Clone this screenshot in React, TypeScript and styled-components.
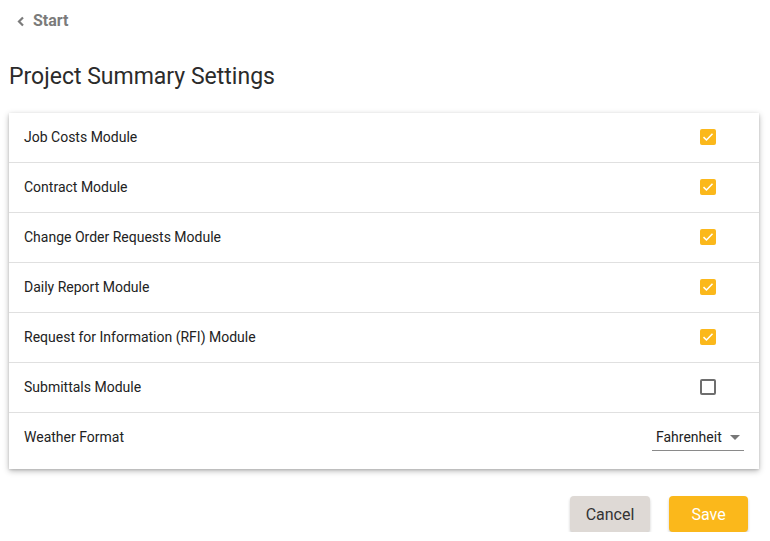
import React from "react";
import styled, { createGlobalStyle } from "styled-components";

const Global = createGlobalStyle`
  html, body { margin: 0; padding: 0; background: #ffffff; }
  body { font-family: Roboto, "Noto Sans", sans-serif; -webkit-font-smoothing: antialiased; }
  * { box-sizing: border-box; }
`;

const Page = styled.div`
  width: 770px;
  padding: 0 11px 0 9px;
`;

const BackLink = styled.a`
  display: flex;
  align-items: center;
  gap: 8px;
  height: 20px;
  margin: 10px 0 0 8px;
  color: #7b7b7b;
  font-size: 16px;
  font-weight: 700;
  text-decoration: none;
  cursor: pointer;
`;

const Chevron = styled.svg`
  margin-top: 3px;
`;

const Title = styled.h1`
  margin: 35px 0 0 0;
  font-size: 23px;
  line-height: 24px;
  font-weight: 400;
  color: #2b2b2b;
`;

const Card = styled.div`
  margin-top: 24px;
  background: #fff;
  box-shadow: 0 2px 6px rgba(0, 0, 0, 0.28), 0 1px 2px rgba(0, 0, 0, 0.12);
`;

const Row = styled.div<{ $last?: boolean }>`
  display: flex;
  align-items: center;
  justify-content: space-between;
  height: ${(p) => (p.$last ? "56px" : "50px")};
  padding: ${(p) => (p.$last ? "0 15px 8px 15px" : "0 43px 1px 15px")};
  border-bottom: ${(p) => (p.$last ? "none" : "1px solid #e0e0e0")};
`;

const Label = styled.span`
  font-size: 14px;
  color: #222;
`;

const Box = styled.span<{ $checked: boolean }>`
  width: 16px;
  height: 16px;
  border-radius: 2px;
  display: flex;
  align-items: center;
  justify-content: center;
  background: ${(p) => (p.$checked ? "#fbb81b" : "transparent")};
  border: ${(p) => (p.$checked ? "none" : "2px solid #6e6e6e")};
`;

const Select = styled.div`
  width: 92px;
  height: 27px;
  margin-top: 1px;
  display: flex;
  align-items: center;
  justify-content: space-between;
  padding: 0 4px 0 4px;
  border-bottom: 1px solid #8a8a8a;
  font-size: 14px;
  color: #222;
`;

const Caret = styled.span`
  width: 0;
  height: 0;
  border-left: 5px solid transparent;
  border-right: 5px solid transparent;
  border-top: 5px solid #777;
`;

const Actions = styled.div`
  display: flex;
  justify-content: flex-end;
  gap: 19px;
  margin-top: 27px;
  padding-right: 11px;
`;

const Button = styled.button<{ $primary?: boolean }>`
  height: 36px;
  width: ${(p) => (p.$primary ? "79px" : "80px")};
  padding: 0;
  border: none;
  border-radius: 4px;
  font-family: Roboto, sans-serif;
  font-size: 16px;
  color: ${(p) => (p.$primary ? "#fff" : "#333")};
  background: ${(p) => (p.$primary ? "#fbb81b" : "#ded9d5")};
  box-shadow: 0 2px 3px rgba(0, 0, 0, 0.2);
`;

const rows: { label: string; checked: boolean }[] = [
  { label: "Job Costs Module", checked: true },
  { label: "Contract Module", checked: true },
  { label: "Change Order Requests Module", checked: true },
  { label: "Daily Report Module", checked: true },
  { label: "Request for Information (RFI) Module", checked: true },
  { label: "Submittals Module", checked: false },
];

const Check = () => (
  <svg width="12" height="10" viewBox="0 0 12 10">
    <path d="M1.5 5.2 L4.5 8 L10.5 1.8" fill="none" stroke="#fff" strokeWidth="1.6" />
  </svg>
);

export default function App() {
  return (
    <Page>
      <Global />
      <BackLink>
        <Chevron width="8" height="11" viewBox="0 0 8 11">
          <path d="M6 1.5 L2 5.5 L6 9.5" fill="none" stroke="#7b7b7b" strokeWidth="2.2" />
        </Chevron>
        Start
      </BackLink>
      <Title>Project Summary Settings</Title>
      <Card>
        {rows.map((r) => (
          <Row key={r.label}>
            <Label>{r.label}</Label>
            <Box $checked={r.checked}>{r.checked && <Check />}</Box>
          </Row>
        ))}
        <Row $last>
          <Label>Weather Format</Label>
          <Select>
            Fahrenheit
            <Caret />
          </Select>
        </Row>
      </Card>
      <Actions>
        <Button>Cancel</Button>
        <Button $primary>Save</Button>
      </Actions>
    </Page>
  );
}
